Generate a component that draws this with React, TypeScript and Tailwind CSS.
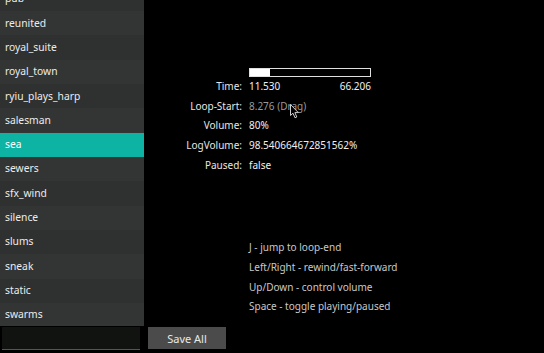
import React from "react";

const items = [
  "pub",
  "reunited",
  "royal_suite",
  "royal_town",
  "ryiu_plays_harp",
  "salesman",
  "sea",
  "sewers",
  "sfx_wind",
  "silence",
  "slums",
  "sneak",
  "static",
  "swarms",
];

function Row({ label, children }: { label: string; children: React.ReactNode }) {
  return (
    <div className="flex h-[19.6px] items-center">
      <div className="w-[98px] text-right text-[#e6e6e6]">{label}</div>
      <div className="ml-[7px]">{children}</div>
    </div>
  );
}

export default function App() {
  return (
    <div
      className="w-[544px] h-[353px] bg-black flex flex-col overflow-hidden text-[10px] leading-none"
      style={{ fontFamily: '"Noto Sans", "Open Sans", sans-serif' }}
    >
      <div className="flex h-[326px]">
        <div className="w-[144px] h-full overflow-hidden bg-[#2f3230] text-[10.3px]">
          <div className="mt-[-13.33px]">
            {items.map((it, i) => (
              <div
                key={it}
                className={
                  "h-[24.33px] flex items-center pl-[5px] pb-[1px] " +
                  (it === "sea"
                    ? "bg-[#0db3a3] text-white"
                    : i % 2 === 0
                    ? "bg-[#2e312f] text-[#ececec]"
                    : "bg-[#323533] text-[#ececec]")
                }
              >
                {it}
              </div>
            ))}
          </div>
        </div>
        <div className="relative flex-1 flex flex-col">
          <div className="mt-[68px] ml-[105px] w-[122px] h-[9px] border border-[#e0e0e0] flex">
            <div className="w-[20px] h-full bg-white"></div>
          </div>
          <div className="text-[#f0f0f0] -mt-[0.5px]">
            <Row label="Time:">
              <div className="w-[122px] flex justify-between">
                <span>11.530</span>
                <span>66.206</span>
              </div>
            </Row>
            <Row label="Loop-Start:">
              <span className="text-[#9a9a9a]">8.276 (Drag)</span>
            </Row>
            <Row label="Volume:">
              <span>80%</span>
            </Row>
            <Row label="LogVolume:">
              <span>98.540664672851562%</span>
            </Row>
            <Row label="Paused:">
              <span>false</span>
            </Row>
          </div>
          <div className="mt-[63px] ml-[105px] text-[#c8c8c8]">
            <div className="h-[19.7px] flex items-center">J - jump to loop-end</div>
            <div className="h-[19.7px] flex items-center">Left/Right - rewind/fast-forward</div>
            <div className="h-[19.7px] flex items-center">Up/Down - control volume</div>
            <div className="h-[19.7px] flex items-center">Space - toggle playing/paused</div>
          </div>
          <svg
            className="absolute left-[146px] top-[104px]"
            width="10"
            height="15"
            viewBox="0 0 10 15"
          >
            <path
              d="M0.5 0.5 L0.5 11.5 L3 9.2 L5 13.8 L6.8 13 L4.9 8.6 L8.3 8.6 Z"
              fill="black"
              stroke="#cfcfcf"
              strokeWidth="1"
              strokeLinejoin="round"
            />
          </svg>
        </div>
      </div>
      <div className="flex items-start pt-[1px]">
        <div className="ml-[2px] w-[138px] h-[23px] bg-[#111311] border-b border-[#555]"></div>
        <div className="ml-[8px] w-[78px] h-[22px] bg-[#4b4b4b] text-[#e8e8e8] text-[11px] flex items-center justify-center">
          Save All
        </div>
      </div>
    </div>
  );
}
